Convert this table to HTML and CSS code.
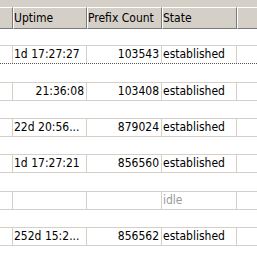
FILE: index.html
```html
<!DOCTYPE html>
<html>
<head>
<meta charset="utf-8">
<link rel="stylesheet" href="styles.css">
</head>
<body>
<div class="list">
  <div class="header">
    <div class="hcell c0"></div>
    <div class="hcell">Uptime</div>
    <div class="hcell">Prefix Count</div>
    <div class="hcell">State</div>
    <div class="hcell last"></div>
  </div>
  <div class="gap g16"></div>
  <div class="row focus">
    <div class="cell"></div>
    <div class="cell">1d 17:27:27</div>
    <div class="cell num">103543</div>
    <div class="cell">established</div>
    <div class="cell last"></div>
  </div>
  <div class="gap g18"></div>
  <div class="row">
    <div class="cell"></div>
    <div class="cell num">21:36:08</div>
    <div class="cell num">103408</div>
    <div class="cell">established</div>
    <div class="cell last"></div>
  </div>
  <div class="gap g17"></div>
  <div class="row">
    <div class="cell"></div>
    <div class="cell">22d 20:56...</div>
    <div class="cell num">879024</div>
    <div class="cell">established</div>
    <div class="cell last"></div>
  </div>
  <div class="gap g17"></div>
  <div class="row">
    <div class="cell"></div>
    <div class="cell">1d 17:27:21</div>
    <div class="cell num">856560</div>
    <div class="cell">established</div>
    <div class="cell last"></div>
  </div>
  <div class="gap g18"></div>
  <div class="row">
    <div class="cell"></div>
    <div class="cell"></div>
    <div class="cell num"></div>
    <div class="cell idle">idle</div>
    <div class="cell last"></div>
  </div>
  <div class="gap g17"></div>
  <div class="row">
    <div class="cell"></div>
    <div class="cell">252d 15:2...</div>
    <div class="cell num">856562</div>
    <div class="cell">established</div>
    <div class="cell last"></div>
  </div>
</div>
</body>
</html>
```

FILE: styles.css
```css
html, body {
  margin: 0;
  padding: 0;
  background: #ffffff;
}
body {
  width: 257px;
  height: 266px;
  overflow: hidden;
  font-family: "DejaVu Sans Condensed", "DejaVu Sans", sans-serif;
  font-stretch: condensed;
  font-size: 12px;
  color: #000;
}
.list {
  width: 257px;
}
.header {
  display: grid;
  grid-template-columns: 13px 74px 75px 75px 1fr;
  background: #d4d0c8;
  padding-top: 7px;
}
.hcell {
  height: 20px;
  line-height: 20px;
  border-top: 1px solid #ffffff;
  border-bottom: 1px solid #7a7a7a;
  border-right: 1px solid #7a7a7a;
  border-left: 1px solid #ffffff;
  padding-left: 0;
  white-space: nowrap;
  overflow: hidden;
}
.hcell.c0 {
  border-left: none;
}
.hcell.last {
  border-right: none;
}
.g16 { height: 16px; }
.g17 { height: 17px; }
.g18 { height: 18px; }
.row {
  display: grid;
  grid-template-columns: 13px 74px 75px 75px 1fr;
  border-top: 1px solid #d4d0c8;
  border-bottom: 1px solid #d4d0c8;
}
.row.focus {
  border-bottom: 1px dotted #555555;
}
.cell {
  height: 17px;
  line-height: 17px;
  border-right: 1px solid #d4d0c8;
  padding: 0 2px 0 1px;
  white-space: nowrap;
  overflow: hidden;
}
.cell.last {
  border-right: none;
}
.num {
  text-align: right;
}
.idle {
  color: #9a9a9a;
}
```
